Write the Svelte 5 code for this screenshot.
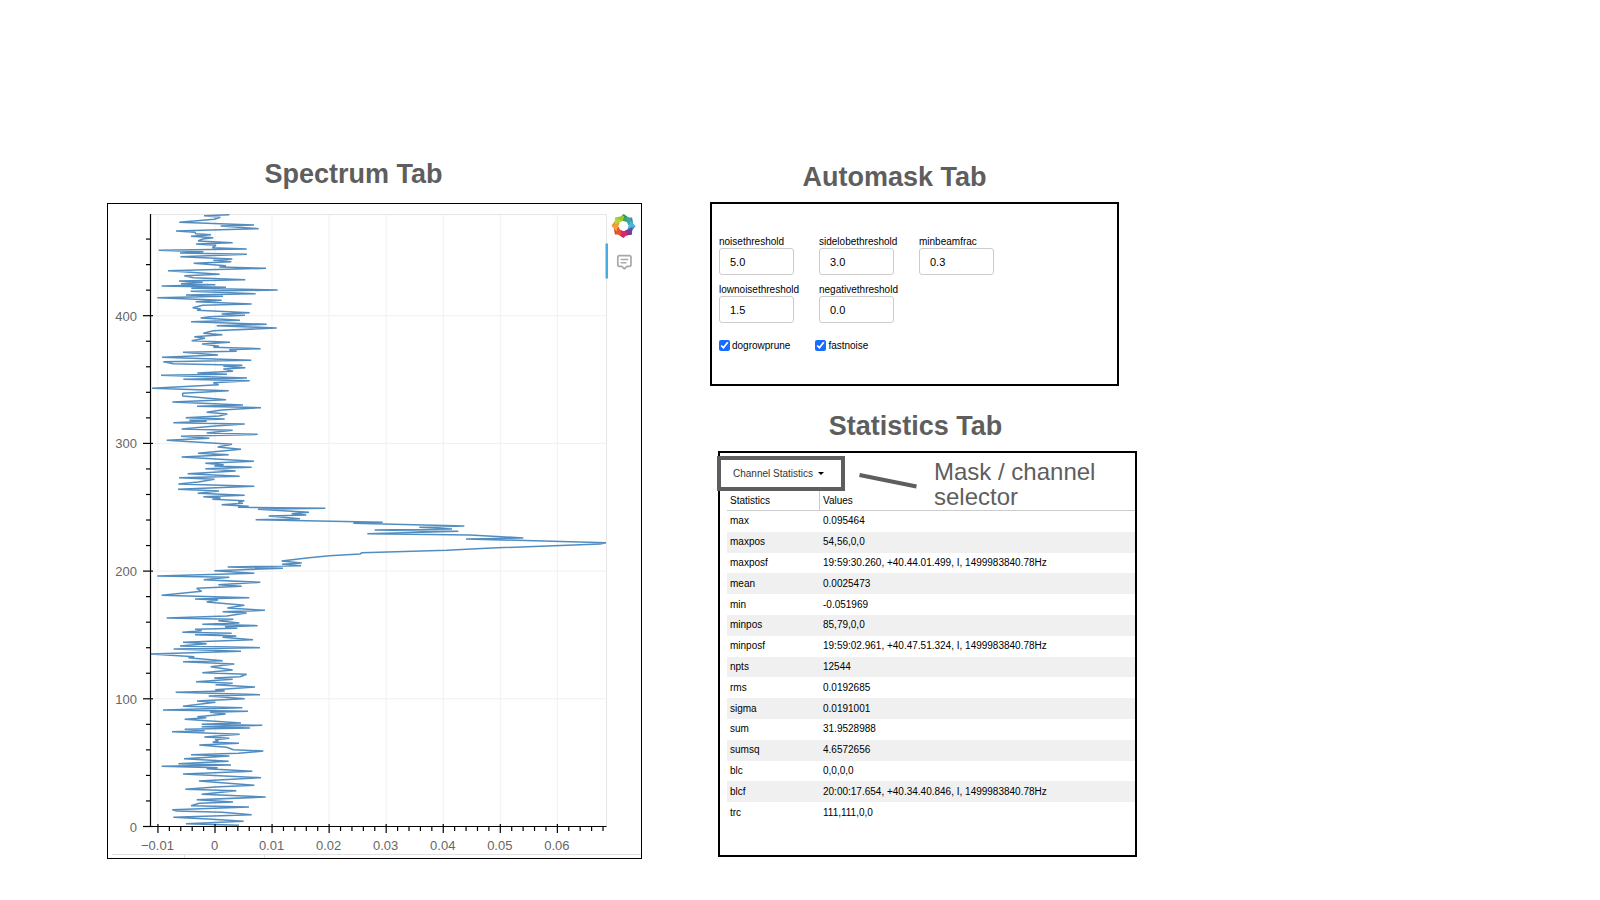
<script>
  // Spectrum trace, sampled in thirds of a chart unit and split into bands from top to bottom.
  const bands = [
    { top: 0, points: '388,59 312,62 361,67 343,73 238,82 462,90 362,93 476,101 228,108 285,112 287,116 333,119 273,124 340,128 308,132 294,138 398,143 288,147 348,151 337,158 440,162 176,166 310,170 240,174 441,178 241,185 397,192 340,196 394,200 281,205 378,212 358,216 498,220 204,227 359,238 253,242 280,248 436,254 237,258 308,262 243,266 346,269 185,273 378,277 274,280 533,285 272,289 467,296 258,300 369,304 172,308 365,316 287,320 455,327 308,331 278,338 302,342 291,346 449,353 365,357 435,361 330,365 302,369 420,376 273,380 500,388 350,392 530,399 340,407 310,415 367,419 283,425 315,430 275,437 390,442 306,447 357,454 340,457 482,461 388,464 410,469' },
    { top: 465, points: '249,7 354,15 186,22 454,31 190,35 220,41 427,46 370,49 436,53 370,57 399,64 292,69 381,73 183,76 441,84 250,88 449,92 340,98 356,104 156,115 386,122 248,130 248,138 378,149 217,156 429,165 291,169 483,173 365,180 320,187 382,192 357,198 257,203 374,207 268,211 320,214 220,218 434,222 345,228 245,237 398,241 320,249 473,253 243,259 328,265 200,271 396,283 353,291 423,298 294,310 386,314 245,321 462,334 316,340 371,344 343,348 455,352 316,356 407,363 263,371 419,379 237,383 343,388 295,396 235,402 463,409 234,418 357,423 293,430 434,436 310,440 362,444 337,448 433,452 415,456 429,460 365,464 446,469 414,472' },
    { top: 855, points: '676,85 474,88 627,97 575,101 619,105 506,108 600,116 467,119 848,127 760,130 1093,138 958,142 1056,147 824,150 1075,154 802,161 1110,165 1270,174 1098,177 1518,188 1500,192 1175,204 1040,211 786,218 780,222 688,227 620,234 545,243 605,249 546,253 603,257 383,261 549,265 343,272 463,280 172,288 388,292 311,299 481,307 355,314 425,319 290,325 305,334 185,346 448,353 285,357 354,360 320,366 433,376 382,384 495,391 368,395 440,399 380,408 200,414 400,418 355,422 418,429 307,433 473,437 375,440 412,445 285,448 305,452 247,457 395,460 285,464 409,468 368,472' },
    { top: 1275, points: '459,59 249,67 320,71 240,78 480,83 221,87 423,94 151,102 283,110 265,113 368,122 249,125 403,132 332,140 398,150 307,158 440,163 420,170 343,174 398,178 288,185 398,190 347,194 465,201 346,209 374,213 227,217 480,224 326,228 434,236 291,243 346,247 249,259 427,263 189,270 444,274 330,277 377,282 292,290 319,293 254,298 423,309 305,313 487,316 305,320 450,324 254,328 314,332 216,335 419,343 313,351 388,355 345,359 355,363 338,367' },
    { top: 1635, points: '417,10 298,15 380,22 400,29 490,33 415,40 273,44 388,48 252,56 386,64 235,71 393,75 185,79 353,83 320,86 457,94 249,102 483,113 297,123 463,136 345,141 256,148 409,152 305,163 497,171 290,179 399,186 298,190 273,197 447,201 217,209 230,213 367,217 455,224 220,232 325,237 431,244 258,251 417,256' }
  ];
  const trace = bands
    .flatMap((b) => b.points.split(' ').map((p) => {
      const [px, py] = p.split(',').map(Number);
      return `${px},${py + b.top}`;
    }))
    .join(' ');

  const x = (v) => 107 + v * 5.706;
  const y = (v) => 622.5 - v * 1.277;

  const xMajor = [-10, 0, 10, 20, 30, 40, 50, 60];
  const xLabels = ['−0.01', '0', '0.01', '0.02', '0.03', '0.04', '0.05', '0.06'];
  const xMinor = Array.from({ length: 40 }, (_, i) => -10 + i * 2).filter((v) => v % 10 !== 0);
  const yMajor = [0, 100, 200, 300, 400];
  const yMinor = Array.from({ length: 24 }, (_, i) => i * 20).filter((v) => v % 100 !== 0);

  const petals = [
    ['#3aa655', '#1f8f4e'], ['#3fa7a0', '#2b8c93'], ['#4fb3e6', '#3a94d0'], ['#7b3f98', '#5f2d82'],
    ['#e0246a', '#c41d4f'], ['#e5552d', '#cf4023'], ['#f5a03a', '#ec7f2c'], ['#b8d433', '#8fc13e']
  ];

  const fields = [
    { name: 'noisethreshold', value: '5.0' },
    { name: 'sidelobethreshold', value: '3.0' },
    { name: 'minbeamfrac', value: '0.3' },
    { name: 'lownoisethreshold', value: '1.5' },
    { name: 'negativethreshold', value: '0.0' }
  ];

  const stats = [
    ['max', '0.095464'],
    ['maxpos', '54,56,0,0'],
    ['maxposf', '19:59:30.260, +40.44.01.499, I, 1499983840.78Hz'],
    ['mean', '0.0025473'],
    ['min', '-0.051969'],
    ['minpos', '85,79,0,0'],
    ['minposf', '19:59:02.961, +40.47.51.324, I, 1499983840.78Hz'],
    ['npts', '12544'],
    ['rms', '0.0192685'],
    ['sigma', '0.0191001'],
    ['sum', '31.9528988'],
    ['sumsq', '4.6572656'],
    ['blc', '0,0,0,0'],
    ['blcf', '20:00:17.654, +40.34.40.846, I, 1499983840.78Hz'],
    ['trc', '111,111,0,0']
  ];
</script>

<main class="page">
  <section class="spectrum">
    <h2>Spectrum Tab</h2>
    <div class="panel chart">
      <svg viewBox="0 0 533 654" role="img" aria-label="Spectrum">
        <g class="grid">
          {#each xMajor as v}<line x1={x(v)} x2={x(v)} y1="10.5" y2="622.5" />{/each}
          {#each yMajor as v}<line x1="42.5" x2="498.5" y1={y(v)} y2={y(v)} />{/each}
        </g>
        <path class="outline" d="M42.5 10.5H498.5V622.5" />
        <polyline class="trace" points={trace} transform="translate(-8 -9) scale(0.33333)" />
        <g class="axis">
          <path d="M42.5 10V622.5H498.5" />
          {#each yMajor as v}<line x1="35" x2="45" y1={y(v)} y2={y(v)} />{/each}
          {#each yMinor as v}<line x1="38" x2="42" y1={y(v)} y2={y(v)} />{/each}
          {#each xMajor as v}<line x1={x(v)} x2={x(v)} y1="620" y2="629" />{/each}
          {#each xMinor as v}<line x1={x(v)} x2={x(v)} y1="622" y2="627" />{/each}
        </g>
        <g class="ticks">
          {#each yMajor as v}<text x="29" y={y(v) + 5} text-anchor="end">{v}</text>{/each}
          {#each xMajor as v, i}<text x={x(v) - 0.5} y="646" text-anchor="middle">{xLabels[i]}</text>{/each}
        </g>
        <path class="footline" d="M4 650.5H533M76.5 650V654M156.5 650V654" />
        <rect x="497.5" y="39.5" width="2.5" height="35" fill="#45ade3" />
        <g transform="translate(515.5 22)">
          {#each petals as [light, dark], i}
            <g transform="rotate({i * 45})">
              <path d="M0-12 7.6-6.6 2.6-4-5.4-7Z" fill={light} />
              <path d="M0-12 2.6-4.4 7.6-6.6Z" fill={dark} opacity="0.7" />
            </g>
          {/each}
          <circle r="4.6" fill="#fff" />
        </g>
        <g fill="none" stroke="#a6a9ac" stroke-width="1.7" stroke-linejoin="round" stroke-linecap="round">
          <path d="M511.5 51.7H521.3Q523 51.7 523 53.5V60.5Q523 62.3 521.3 62.3H519L516.4 64.9 513.8 62.3H511.5Q509.8 62.3 509.8 60.5V53.5Q509.8 51.7 511.5 51.7Z" />
          <path d="M513.2 55.5H519.8M513.2 58.7H518" stroke-width="1.4" />
        </g>
      </svg>
    </div>
  </section>

  <div class="side">
    <section class="automask">
      <h2>Automask Tab</h2>
      <form class="panel form">
        <div class="fields">
          {#each fields as f}
            <div class="field">
              <label for={f.name}>{f.name}</label>
              <input id={f.name} type="text" value={f.value} />
            </div>
          {/each}
        </div>
        <div class="checks">
          <label class="check"><input type="checkbox" checked />dogrowprune</label>
          <label class="check"><input type="checkbox" checked />fastnoise</label>
        </div>
      </form>
    </section>

    <section class="statistics">
      <h2>Statistics Tab</h2>
      <div class="panel stats">
        <div class="selector">
          <select aria-label="Statistics type">
            <option>Channel Statistics</option>
          </select>
          <svg class="caret" viewBox="0 0 6 3" aria-hidden="true"><path d="M0 0H6L3 3Z" /></svg>
        </div>
        <table>
          <thead>
            <tr><th>Statistics</th><th>Values</th></tr>
          </thead>
          <tbody>
            {#each stats as [name, value]}
              <tr><td>{name}</td><td>{value}</td></tr>
            {/each}
          </tbody>
        </table>
        <div class="note">
          <svg viewBox="0 0 60 18" aria-hidden="true"><path d="M1.5 3 58.5 14.5" /></svg>
          <p>Mask / channel<br />selector</p>
        </div>
      </div>
    </section>
  </div>
</main>

<style>
  :global(body) {
    margin: 0;
    background: #fff;
  }

  .page {
    display: grid;
    grid-template-columns: 107fr 535fr 68fr 427fr 463fr;
    align-items: start;
    padding: 158px 0 40px;
    font-family: 'Liberation Sans', Arial, Helvetica, sans-serif;
    font-size: 10px;
    color: #000;
  }

  h2 {
    margin: 0 0 9px;
    font-size: 27px;
    line-height: 32px;
    font-weight: 700;
    text-align: center;
    color: #5e5e5e;
  }

  .panel {
    box-sizing: border-box;
    border: 2px solid #000;
  }

  .spectrum {
    grid-column: 2;
  }

  .spectrum h2 {
    margin-bottom: 13px;
    padding-right: 42px;
  }

  .chart {
    border-width: 1px;
  }

  .chart svg {
    display: block;
    width: 100%;
  }

  .grid line {
    stroke: #f0f0f0;
  }

  .outline {
    fill: none;
    stroke: #e5e5e5;
  }

  .trace {
    fill: none;
    stroke: #3579b5;
    stroke-width: 4.6;
    stroke-linejoin: bevel;
    opacity: 0.85;
  }

  .axis {
    fill: none;
    stroke: #000;
    stroke-width: 1.2;
  }

  .ticks {
    font-size: 13px;
    fill: #666;
  }

  .footline {
    fill: none;
    stroke: #e2e2e2;
  }

  .side {
    grid-column: 4;
    display: flex;
    flex-direction: column;
    gap: 24px;
    padding-top: 3px;
  }

  .automask {
    margin-right: 18px;
  }

  .automask h2 {
    padding-right: 40px;
  }

  .form {
    padding: 31px 7px 32px;
  }

  .fields {
    display: grid;
    grid-template-columns: repeat(3, 75px);
    gap: 8px 25px;
  }

  .field label {
    display: block;
    line-height: 13px;
    white-space: nowrap;
  }

  .field input {
    box-sizing: border-box;
    display: block;
    width: 100%;
    height: 27px;
    padding: 0 10px;
    border: 1px solid #ccc;
    border-radius: 3px;
    background: #fff;
    font: inherit;
    font-size: 11px;
    color: #000;
  }

  .checks {
    display: flex;
    gap: 25px;
    margin-top: 16px;
  }

  .check {
    display: flex;
    align-items: center;
    gap: 2px;
    line-height: 13px;
  }

  .check input {
    width: 11px;
    height: 11px;
    margin: 0;
    accent-color: #1a6cff;
  }

  .statistics {
    margin-left: 8px;
  }

  .statistics h2 {
    padding-right: 24px;
  }

  .stats {
    position: relative;
    padding: 3px 0 32px;
  }

  .selector {
    position: relative;
    box-sizing: border-box;
    display: flex;
    align-items: center;
    width: 128px;
    height: 35px;
    margin-left: -3px;
    padding-left: 12px;
    border: 4px solid #5e5e5e;
    background: #fff;
  }

  .selector select {
    width: 96px;
    padding: 0;
    border: 0;
    appearance: none;
    background: none;
    font: inherit;
    color: #333;
  }

  .caret {
    width: 6px;
    height: 3px;
    margin-left: -11px;
    pointer-events: none;
  }

  table {
    width: calc(100% - 7px);
    height: 332px;
    margin-left: 7px;
    border-collapse: separate;
    border-spacing: 0;
    table-layout: fixed;
    line-height: 12px;
  }

  th,
  td {
    padding: 0 3px;
    text-align: left;
    font-weight: 400;
  }

  th {
    height: 19px;
    border-bottom: 1px solid #ccc;
  }

  th:first-child {
    box-sizing: border-box;
    width: 93px;
    border-right: 1px solid #ccc;
  }

  tbody tr:nth-child(even) td {
    background: #f0f0f0;
  }

  .note {
    position: absolute;
    top: 6px;
    left: 138px;
    display: flex;
    gap: 16px;
    pointer-events: none;
    color: #5e5e5e;
  }

  .note svg {
    width: 60px;
    height: 18px;
    margin-top: 13px;
    fill: none;
    stroke: #5e5e5e;
    stroke-width: 4;
  }

  .note p {
    margin: 0;
    font-size: 24px;
    line-height: 25px;
    white-space: nowrap;
  }
</style>
